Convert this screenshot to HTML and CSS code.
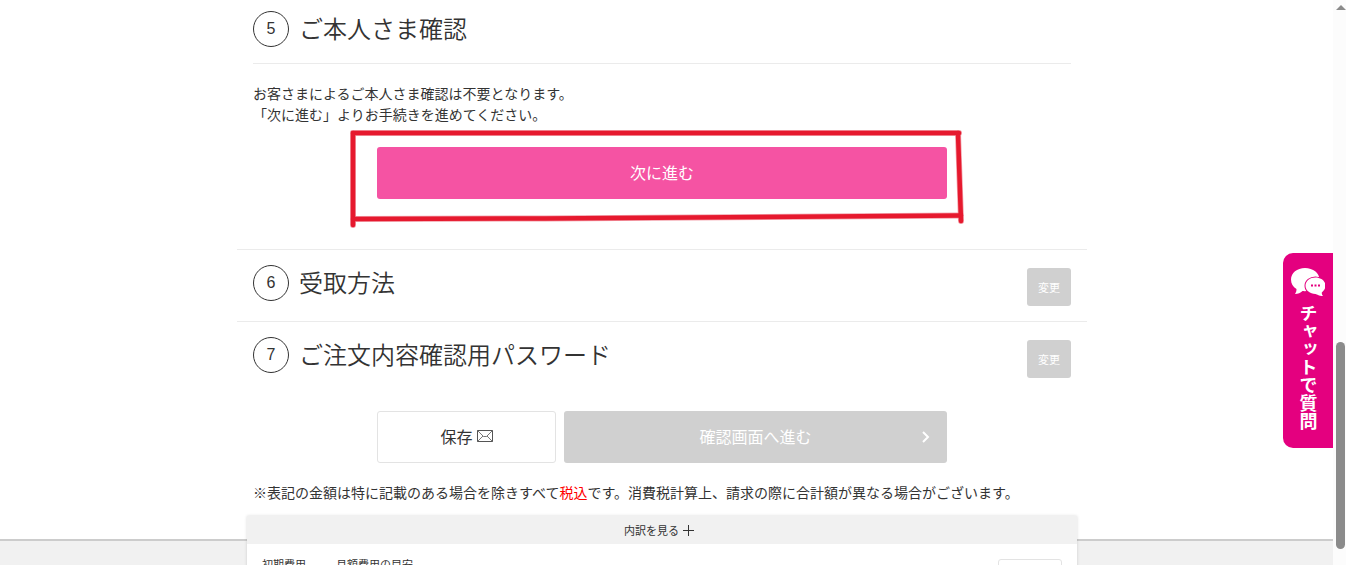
FILE: index.html
```html
<!DOCTYPE html>
<html lang="ja">
<head>
  <meta charset="UTF-8" />
  <meta name="viewport" content="width=device-width, initial-scale=1.0"/>
  <title>お手続き</title>
  <link rel="stylesheet" href="styles.css">
</head>
<body>
  <div class="page">
    <main class="container">
      <section class="step step-open">
        <div class="step-header">
          <span class="step-number">5</span>
          <h2>ご本人さま確認</h2>
        </div>
        <p class="step-text">お客さまによるご本人さま確認は不要となります。<br>「次に進む」よりお手続きを進めてください。</p>
        <div class="step-action">
          <button type="button" class="btn btn-primary">次に進む</button>
          <svg class="marker" viewBox="0 0 616 100" fill="none" stroke-linecap="round" aria-hidden="true">
            <g stroke="#f2a0aa" stroke-width="6">
              <path d="M4 4H610" />
              <path d="M4 4V96" />
              <path d="M4 90L196 89.500L612 86.500" />
              <path d="M609 4L612 92" />
            </g>
            <g stroke="#e6192e" stroke-width="4.500">
              <path d="M4 4H610" />
              <path d="M4 4V96" />
              <path d="M4 90L196 89.500L612 86.500" />
              <path d="M609 4L612 92" />
            </g>
          </svg>
        </div>
      </section>

      <section class="step">
        <div class="step-header">
          <span class="step-number">6</span>
          <h2>受取方法</h2>
          <button type="button" class="btn btn-change">変更</button>
        </div>
      </section>

      <section class="step">
        <div class="step-header">
          <span class="step-number">7</span>
          <h2>ご注文内容確認用パスワード</h2>
          <button type="button" class="btn btn-change">変更</button>
        </div>
      </section>

      <div class="actions">
        <button type="button" class="btn btn-save">
          保存
          <svg width="16" height="12" viewBox="0 0 16 12" fill="none" stroke="#555" aria-hidden="true">
            <path d="M.5 .5h15v11H.5z" />
            <path d="M.5 .5L6.500 6.500h3L15.500 .5M.5 11.500L6 6M15.500 11.500L10 6" stroke-width=".8" />
          </svg>
        </button>
        <button type="button" class="btn btn-confirm">
          確認画面へ進む
          <svg width="8" height="12" viewBox="0 0 8 12" fill="none" stroke="#fff" stroke-width="2" aria-hidden="true">
            <path d="M1 1l5 5-5 5" />
          </svg>
        </button>
      </div>

      <p class="note">※表記の金額は特に記載のある場合を除きすべて<span class="tax">税込</span>です。消費税計算上、請求の際に合計額が異なる場合がございます。</p>
    </main>

    <footer class="footer">
      <div class="summary">
        <button type="button" class="summary-toggle">
          内訳を見る
          <svg width="11" height="11" viewBox="0 0 11 11" stroke="#333" aria-hidden="true">
            <path d="M0 5.500h11M5.500 0v11" />
          </svg>
        </button>
        <div class="summary-body">
          <span class="cost-first">初期費用</span>
          <span>月額費用の目安</span>
          <span class="summary-box"></span>
        </div>
      </div>
    </footer>
  </div>

  <button type="button" class="chat">
    <svg width="34" height="28" viewBox="0 0 34 28" fill="#fff" aria-hidden="true">
      <path d="M14 0C6 0 0 5 0 11.500c0 4 2 7.500 5.500 9.500 0 2-.5 3.500-1.500 5 3 0 5.500-1.200 7.500-3 6 .8 17-2 17-11.500C28.500 5 22 0 14 0z" />
      <path d="M24.500 9.500c-5.500 0-10 3.500-10 8.300 0 4.700 4.500 8.200 10 8.200 4 1.500 5 2.200 7.500 2-1-1-1.300-2.200-1.200-3.500 2-1.500 3.700-4 3.700-6.700 0-4.800-4.500-8.300-10-8.300z" stroke="#e4007f" stroke-width="2" paint-order="stroke" />
      <path d="M20 16.500h2v2h-2zM23.500 16.500h2v2h-2zM27 16.500h2v2h-2z" fill="#e4007f" />
    </svg>
    <span>チャットで質問</span>
  </button>

  <div class="scrollbar" aria-hidden="true">
    <div class="scrollbar-arrow"></div>
    <div class="scrollbar-thumb"></div>
  </div>
</body>
</html>
```

FILE: styles.css
```css
* {
  box-sizing: border-box;
  margin: 0;
  padding: 0;
}

body {
  display: flex;
  height: 100vh;
  overflow: hidden;
  background: #fff;
  color: #333;
  font-family: 'Noto Sans CJK JP', sans-serif;
  font-size: 14px;
  font-weight: 400;
  line-height: 21px;
}

.page {
  flex: 1;
  display: flex;
  flex-direction: column;
}

.container {
  width: 100%;
  max-width: 859px;
  margin: 0 auto;
  padding-right: 9px;
}

/* steps */
.step {
  padding: 15px 16px;
  border-top: 1px solid #ebebeb;
}

.step-open {
  padding: 11px 16px 50px;
  border-top: none;
}

.step-header {
  display: flex;
  align-items: flex-start;
}

.step-open .step-header {
  padding-bottom: 16px;
  border-bottom: 1px solid #ebebeb;
}

.step-number {
  width: 36px;
  height: 36px;
  border: 1px solid #333;
  border-radius: 50%;
  font-family: 'Liberation Sans', Arial, sans-serif;
  font-size: 16px;
  line-height: 34px;
  text-align: center;
}

h2 {
  flex: 1;
  margin-left: 10px;
  font-size: 24px;
  font-weight: 350;
  line-height: 34px;
}

.step-text {
  margin: 19px 0 22px;
}

.step-action {
  position: relative;
  max-width: 570px;
  margin: 0 auto;
}

/* hand-drawn frame round the button */
.marker {
  position: absolute;
  top: -18px;
  left: -28px;
  width: 616px;
  height: 100px;
  pointer-events: none;
}

/* buttons */
.btn {
  border: none;
  border-radius: 3px;
  font: inherit;
  font-size: 16px;
  color: #fff;
  cursor: pointer;
}

.btn-primary {
  display: block;
  width: 100%;
  height: 52px;
  padding-bottom: 2px;
  background: #f553a3;
}

.btn-change {
  width: 44px;
  height: 38px;
  margin-top: 3px;
  background: #d0d0d0;
  font-size: 11px;
}

.actions {
  display: flex;
  gap: 8px;
  max-width: 570px;
  margin: 18px auto 19px;
}

.btn-save,
.btn-confirm {
  display: flex;
  align-items: center;
  justify-content: center;
  height: 52px;
  padding-bottom: 2px;
}

.btn-save {
  width: 179px;
  gap: 4px;
  border: 1px solid #e3e3e3;
  background: #fff;
  color: #333;
}

.btn-confirm {
  position: relative;
  flex: 1;
  background: #d0d0d0;
}

.btn-confirm svg {
  position: absolute;
  top: 20px;
  right: 17px;
}

.note {
  margin: 0 16px 36px;
}

.tax {
  color: #f00;
}

/* cost summary */
.footer {
  flex: 1;
  padding-right: 9px;
  border-top: 2px solid #ccc;
  background: #f1f1f1;
}

.summary {
  max-width: 830px;
  margin: -25px auto 0;
  background: #fff;
  box-shadow: 0 0 3px rgba(0, 0, 0, 0.15);
}

.summary-toggle {
  display: flex;
  align-items: center;
  justify-content: center;
  gap: 4px;
  width: 100%;
  height: 28px;
  padding-right: 6px;
  border: none;
  background: #f1f1f1;
  color: #333;
  font: inherit;
  font-size: 11px;
  cursor: pointer;
}

.summary-body {
  display: flex;
  align-items: flex-start;
  padding: 15px 15px 0;
  font-size: 11px;
  line-height: 11px;
}

.cost-first {
  width: 74px;
}

.summary-box {
  width: 64px;
  height: 40px;
  margin-left: auto;
  border: 1px solid #e3e3e3;
  border-radius: 3px;
}

/* chat tab */
.chat {
  position: fixed;
  top: 253px;
  right: 13px;
  display: flex;
  flex-direction: column;
  align-items: center;
  gap: 8px;
  width: 50px;
  height: 195px;
  padding-top: 15px;
  border: none;
  border-radius: 10px 0 0 10px;
  background: #e4007f;
  color: #fff;
  font: inherit;
  font-size: 18px;
  font-weight: 700;
  cursor: pointer;
}

.chat span {
  writing-mode: vertical-rl;
}

/* scrollbar */
.scrollbar {
  display: flex;
  flex-direction: column;
  align-items: center;
  width: 13px;
  padding: 5px 0 16px 2px;
  background: #fcfcfc;
}

.scrollbar-arrow {
  border: 5px solid transparent;
  border-top: none;
  border-bottom: 5px solid #8b8b8b;
}

.scrollbar-thumb {
  width: 9px;
  height: 207px;
  margin-top: auto;
  border-radius: 5px;
  background: #8b8b8b;
}
```
